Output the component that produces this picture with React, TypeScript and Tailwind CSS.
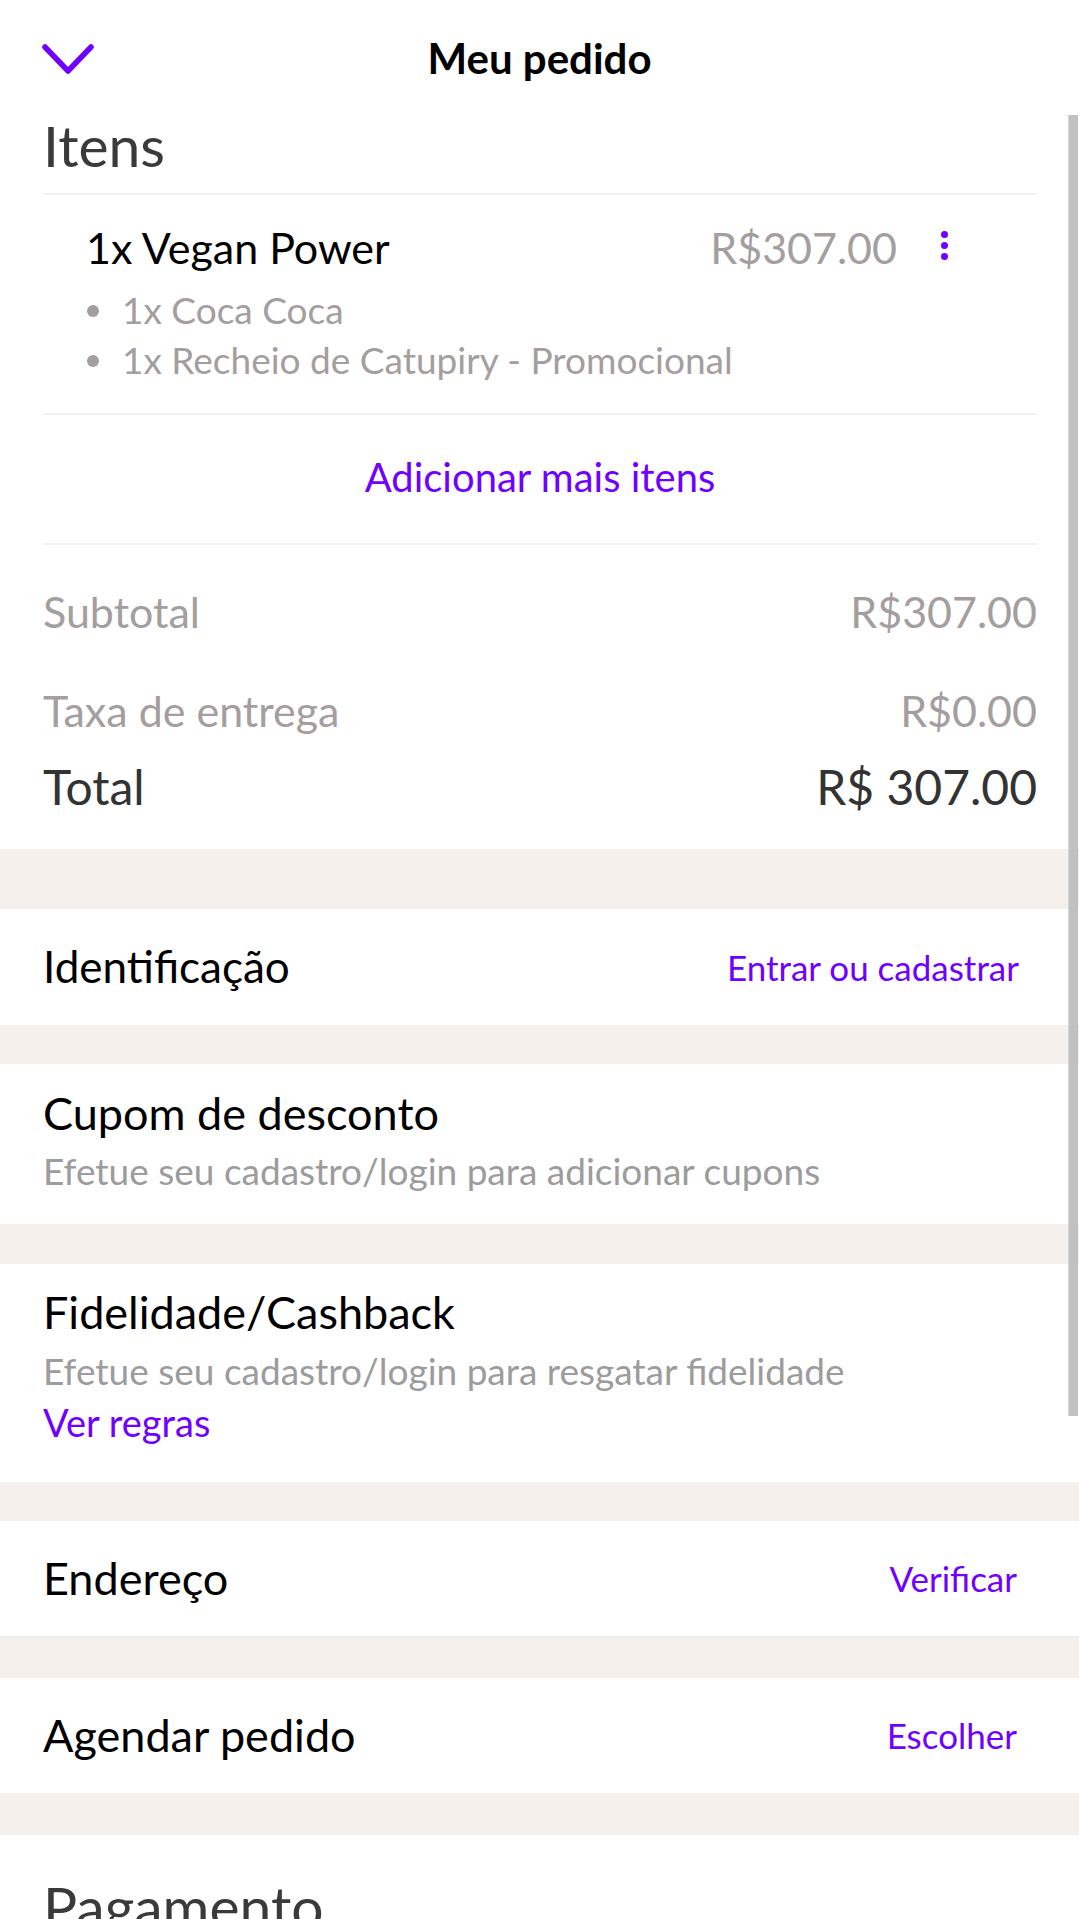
import React from "react";

const purple = "text-[#7000ff]";

function Band({ h }: { h: string }) {
  return <div className={`${h} bg-[#f5f0ec]`} />;
}

export default function App() {
  return (
    <div
      className="relative w-[1079px] h-[1919px] overflow-hidden bg-white text-black"
      style={{ fontFamily: "Lato, 'Noto Sans', sans-serif" }}
    >
      {/* scrollbar */}
      <div className="absolute right-[1px] top-[115px] w-[10px] h-[1301px] bg-[#c1c1c1] border-l border-[#d6d6d6]" />

      {/* header */}
      <div className="relative h-[116px] flex items-center px-[43px]">
        <svg width="52" height="30" viewBox="0 0 52 30" className="absolute left-[42px] top-[44px]">
          <path d="M3 3 L26 27 L49 3" fill="none" stroke="#7000ff" strokeWidth="5.5" strokeLinecap="round" strokeLinejoin="round" />
        </svg>
        <div className="flex-1 text-center text-[42px] leading-[1.2] font-bold">Meu pedido</div>
      </div>

      {/* items */}
      <div className="pl-[43px] pr-[42px]">
        <div className="pt-[1px] pb-[19px] border-b-2 border-[#f2f2f2]">
          <div className="text-[57px] leading-none text-[#3a3a3a]">Itens</div>
        </div>

        <div className="pl-[43px] pr-[140px] pt-[28px] pb-[28px] border-b-2 border-[#f2f2f2]">
          <div className="relative flex items-center justify-between">
            <div className="text-[43px] leading-[50px]">1x Vegan Power</div>
            <div className="text-[43px] leading-[50px] text-[#a49e9e]">R$307.00</div>
            <div className="absolute right-[-51px] top-[8px] flex flex-col gap-[4px]">
              <span className="w-[7px] h-[7px] rounded-full bg-[#7000ff]" />
              <span className="w-[7px] h-[7px] rounded-full bg-[#7000ff]" />
              <span className="w-[7px] h-[7px] rounded-full bg-[#7000ff]" />
            </div>
          </div>
          <div className="mt-[12px] text-[37px] leading-[50px] text-[#a49e9e]">
            <div className="flex items-center">
              <span className="ml-[1px] w-[12px] h-[12px] rounded-full bg-[#a49e9e] mr-[23px] mt-[2px]" />
              <span>1x Coca Coca</span>
            </div>
            <div className="flex items-center">
              <span className="ml-[1px] w-[12px] h-[12px] rounded-full bg-[#a49e9e] mr-[23px] mt-[2px]" />
              <span>1x Recheio de Catupiry - Promocional</span>
            </div>
          </div>
        </div>

        <div className={`pt-[38px] pb-[42px] text-center text-[40px] leading-[1.2] border-b-2 border-[#f2f2f2] ${purple}`}>
          Adicionar mais itens
        </div>

        <div className="pt-[42px] pb-[33px]">
          <div className="flex justify-between text-[43px] leading-[50px] text-[#a49e9e]">
            <span>Subtotal</span>
            <span>R$307.00</span>
          </div>
          <div className="mt-[49px] flex justify-between text-[43px] leading-[50px] text-[#a49e9e]">
            <span>Taxa de entrega</span>
            <span>R$0.00</span>
          </div>
          <div className="mt-[22px] flex justify-between text-[48px] leading-[1.2] text-[#333333]">
            <span>Total</span>
            <span>R$ 307.00</span>
          </div>
        </div>
      </div>

      <Band h="h-[60px]" />

      <div className="h-[116px] flex items-center justify-between pl-[43px] pr-[60px]">
        <span className="text-[44px] leading-[1.2]">Identificação</span>
        <span className={`text-[35px] leading-[1.2] ${purple}`}>Entrar ou cadastrar</span>
      </div>

      <Band h="h-[39px]" />

      <div className="h-[160px] pl-[43px] pr-[60px] pt-[23px]">
        <div className="text-[45px] leading-[52px]">Cupom de desconto</div>
        <div className="mt-[10px] text-[37px] leading-[1.2] text-[#9c9c9c]">Efetue seu cadastro/login para adicionar cupons</div>
      </div>

      <Band h="h-[40px]" />

      <div className="h-[218px] pl-[43px] pr-[60px] pt-[22px]">
        <div className="text-[45px] leading-[52px]">Fidelidade/Cashback</div>
        <div className="mt-[11px] text-[37px] leading-[1.2] text-[#9c9c9c]">Efetue seu cadastro/login para resgatar fidelidade</div>
        <div className={`mt-[7px] text-[38px] leading-[1.2] ${purple}`}>Ver regras</div>
      </div>

      <Band h="h-[39px]" />

      <div className="h-[116px] flex items-center justify-between pl-[43px] pr-[62px] border-b border-[#eeeeee]">
        <span className="text-[45px] leading-[1.2]">Endereço</span>
        <span className={`text-[35px] leading-[1.2] ${purple}`}>Verificar</span>
      </div>

      <Band h="h-[41px]" />

      <div className="h-[115px] flex items-center justify-between pl-[43px] pr-[62px]">
        <span className="text-[45px] leading-[1.2]">Agendar pedido</span>
        <span className={`text-[35px] leading-[1.2] ${purple}`}>Escolher</span>
      </div>

      <Band h="h-[42px]" />

      <div className="pl-[43px] pt-[43px]">
        <div className="text-[57px] leading-none text-[#3a3a3a]">Pagamento</div>
      </div>
    </div>
  );
}
